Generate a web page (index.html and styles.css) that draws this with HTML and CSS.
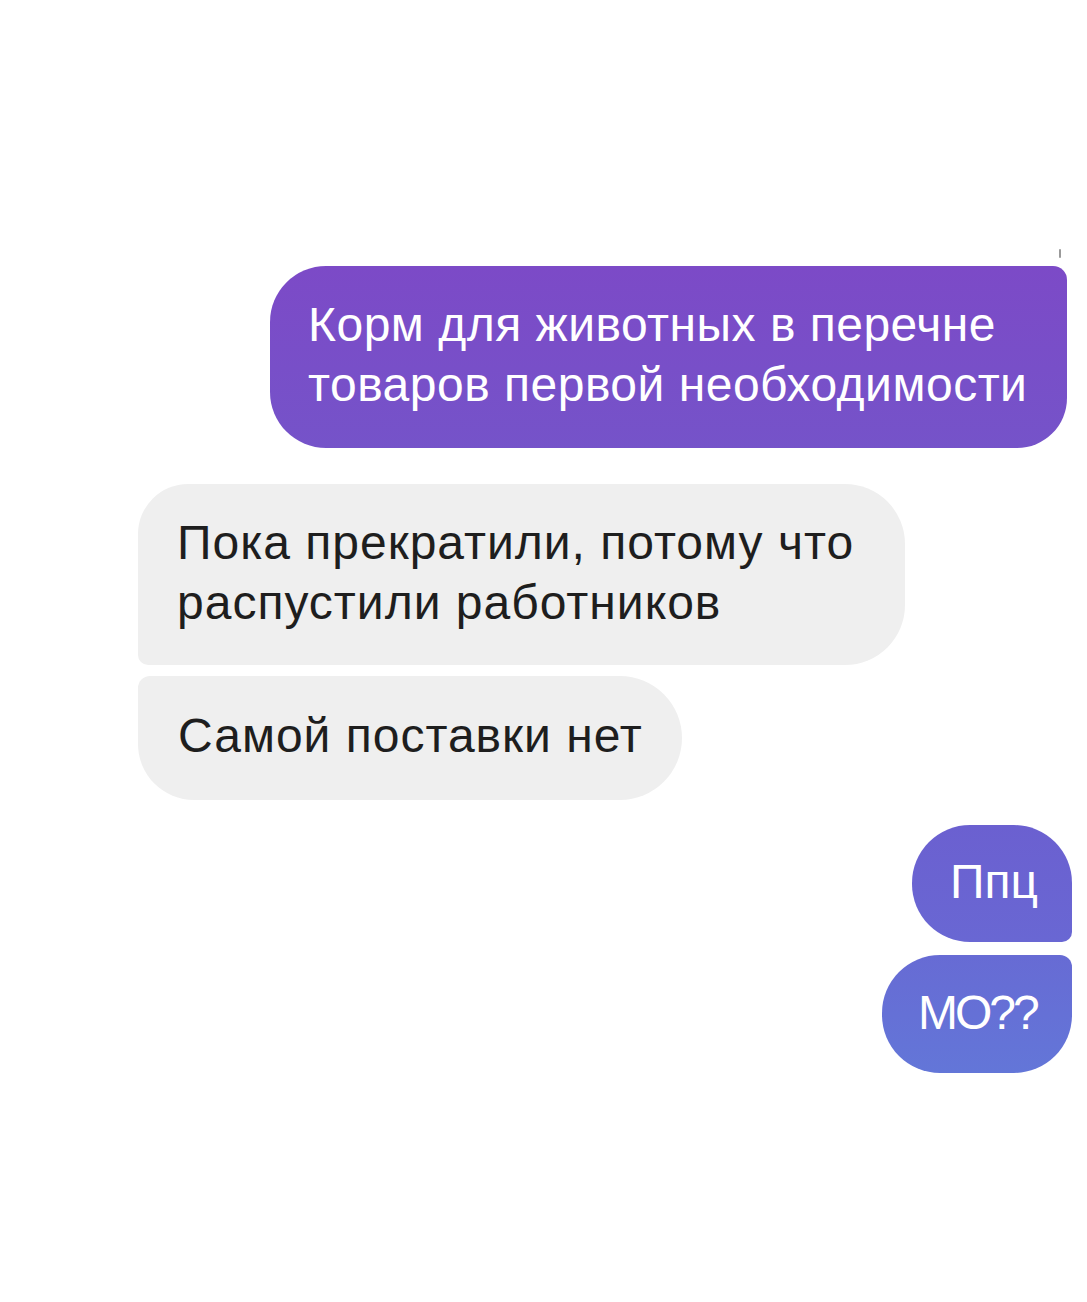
FILE: index.html
```html
<!DOCTYPE html>
<html lang="ru">
<head>
<meta charset="utf-8">
<link rel="stylesheet" href="styles.css">
</head>
<body>
<div class="chat">
  <span class="tick"></span>
  <div class="msg out first">Корм для животных в перечне<br>товаров первой необходимости</div>
  <div class="msg in second">Пока прекратили, потому что<br>распустили работников</div>
  <div class="msg in third">Самой поставки нет</div>
  <div class="msg out fourth">Ппц</div>
  <div class="msg out fifth">МО??</div>
</div>
</body>
</html>
```
FILE: styles.css
```css
html, body {
  margin: 0;
  padding: 0;
  background: #ffffff;
}
body {
  width: 1087px;
  height: 1302px;
  overflow: hidden;
  font-family: "Liberation Sans", Arial, sans-serif;
}
.chat {
  position: relative;
  display: flex;
  flex-direction: column;
  padding-top: 266px;
}
.tick {
  position: absolute;
  left: 1059px;
  top: 249px;
  width: 2px;
  height: 9px;
  border-radius: 1px;
  background: #9a9a9a;
}
.msg {
  font-size: 48px;
  line-height: 60px;
  letter-spacing: 0.5px;
  white-space: nowrap;
  box-sizing: border-box;
}
.out {
  align-self: flex-end;
  color: #ffffff;
}
.in {
  align-self: flex-start;
  color: #1e1e1e;
  background: #efefef;
  margin-left: 138px;
  letter-spacing: 1px;
}
.first {
  margin-right: 20px;
  width: 797px;
  height: 182px;
  padding: 29px 0 0 38px;
  background: linear-gradient(180deg, #7c4ac7 0%, #7553c9 100%);
  border-radius: 56px 14px 50px 56px;
}
.second {
  margin-top: 36px;
  width: 767px;
  height: 181px;
  padding: 29px 0 0 39px;
  border-radius: 50px 60px 60px 10px;
}
.third {
  margin-top: 11px;
  width: 544px;
  height: 124px;
  padding: 30px 0 0 40px;
  border-radius: 12px 62px 62px 56px;
}
.fourth {
  margin-top: 25px;
  margin-right: 15px;
  width: 160px;
  height: 117px;
  padding: 27px 0 0 38px;
  letter-spacing: 0;
  background: linear-gradient(180deg, #6b60d0 0%, #6967d3 100%);
  border-radius: 58px 58px 10px 58px;
}
.fifth {
  margin-top: 13px;
  margin-right: 15px;
  width: 190px;
  height: 118px;
  padding: 28px 0 0 36px;
  letter-spacing: -3px;
  background: linear-gradient(180deg, #676bd4 0%, #6376d8 100%);
  border-radius: 58px 12px 58px 58px;
}
```
